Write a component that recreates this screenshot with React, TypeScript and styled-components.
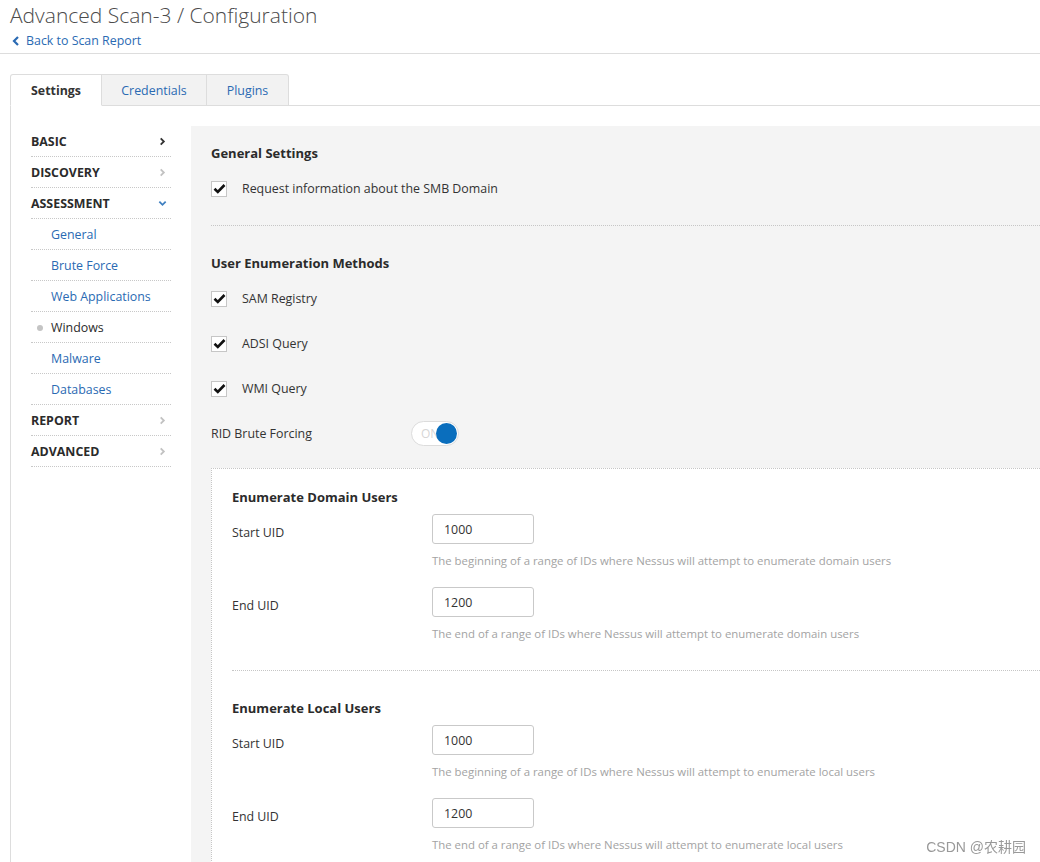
import * as React from "react";
import styled, { createGlobalStyle } from "styled-components";

const GlobalStyle = createGlobalStyle`
  html, body {
    margin: 0;
    padding: 0;
    background: #fff;
    font-family: "Open Sans", "Noto Sans", "Noto Sans CJK SC", sans-serif;
    color: #333;
    font-size: 12.4px;
  }
  * { box-sizing: border-box; }
`;

const Header = styled.div`
  padding: 0 0 3px 10px;
  border-bottom: 1px solid #ddd;
  h1 {
    margin: 0;
    font-size: 21px;
    font-weight: 300;
    color: #4b4b4b;
    line-height: 31px;
  }
`;

const BackLink = styled.a`
  display: flex;
  align-items: center;
  gap: 6px;
  padding-left: 2px;
  color: #2a6ab3;
  font-size: 12.4px;
  line-height: 19px;
  text-decoration: none;
`;

const Tabs = styled.div`
  display: flex;
  margin: 20px 0 0 10px;
  border-bottom: 1px solid #ddd;
`;

const Tab = styled.div<{ $active?: boolean; $w: number }>`
  width: ${({ $w }) => $w}px;
  height: 32px;
  margin-bottom: -1px;
  display: flex;
  align-items: center;
  justify-content: center;
  border: 1px solid #ddd;
  border-left-width: ${({ $active }) => ($active ? "1px" : "0")};
  border-bottom-color: ${({ $active }) => ($active ? "#fff" : "#ddd")};
  border-radius: ${({ $active }) => ($active ? "3px 0 0 0" : "0")};
  background: ${({ $active }) => ($active ? "#fff" : "#f2f2f2")};
  color: ${({ $active }) => ($active ? "#333" : "#2a6ab3")};
  font-weight: ${({ $active }) => ($active ? 700 : 400)};
  &:last-child {
    border-radius: 0 3px 0 0;
  }
`;

const Body = styled.div`
  display: flex;
  gap: 20px;
  margin-left: 10px;
  border-left: 1px solid #ddd;
  padding-top: 20px;
  min-height: 760px;
`;

const Sidebar = styled.nav`
  width: 160px;
  flex-shrink: 0;
  padding-left: 20px;
`;

const NavRow = styled.div<{ $sub?: boolean; $current?: boolean }>`
  position: relative;
  height: 31px;
  display: flex;
  align-items: center;
  justify-content: space-between;
  padding-left: ${({ $sub }) => ($sub ? "20px" : "0")};
  padding-right: 4px;
  border-bottom: 1px dotted #c8c8c8;
  font-weight: ${({ $sub }) => ($sub ? 400 : 700)};
  color: ${({ $sub, $current }) => ($sub && !$current ? "#2a6ab3" : "#2b2b2b")};
`;

const Dot = styled.span`
  position: absolute;
  left: 6px;
  top: 13px;
  width: 6px;
  height: 6px;
  border-radius: 50%;
  background: #c4c4c4;
`;

const Main = styled.main`
  flex: 1;
  background: #f4f4f4;
  padding: 19px 0 0 20px;
`;

const SectionTitle = styled.div`
  font-weight: 700;
  font-size: 13px;
  line-height: 17px;
  color: #2b2b2b;
`;

const Group = styled.div`
  display: flex;
  flex-direction: column;
  margin-top: 4px;
`;

const CheckRow = styled.div`
  display: flex;
  align-items: center;
  height: 45px;
  gap: 15px;
`;

const Box = styled.span`
  width: 16px;
  height: 16px;
  border: 1px solid #c6c6c6;
  background: #fff;
  display: flex;
  align-items: center;
  justify-content: center;
`;

const Divider = styled.div`
  border-top: 1px dotted #c6c6c6;
  margin: 14px 0 29px;
`;

const ToggleRow = styled.div`
  display: flex;
  align-items: center;
  height: 45px;
  label {
    width: 200px;
  }
`;

const Toggle = styled.div`
  position: relative;
  width: 48px;
  height: 25px;
  border: 1px solid #dcdcdc;
  border-radius: 13px;
  background: #fff;
  color: #d6d6d6;
  font-size: 12px;
  display: flex;
  align-items: center;
  padding-left: 9px;
`;

const Knob = styled.span`
  position: absolute;
  right: 1px;
  top: 1px;
  width: 21px;
  height: 21px;
  border-radius: 50%;
  background: #0a6ebd;
`;

const SubPanel = styled.div`
  margin-top: 12px;
  background: #fff;
  border: 1px dotted #c6c6c6;
  border-right: none;
  border-bottom: none;
  padding: 20px 0 0 20px;
`;

const FieldRow = styled.div`
  display: flex;
  padding-bottom: 18px;
`;

const FieldLabel = styled.div`
  width: 200px;
  padding-top: 10px;
`;

const FieldControl = styled.div`
  display: flex;
  flex-direction: column;
  gap: 8px;
`;

const Input = styled.input`
  width: 102px;
  height: 30px;
  border: 1px solid #c9c9c9;
  border-radius: 3px;
  padding: 0 11px;
  font-family: inherit;
  font-size: 12.4px;
  color: #333;
  background: #fff;
`;

const Help = styled.div`
  color: #a3a3a3;
  font-size: 11.4px;
  line-height: 17px;
`;

const SubTitle = styled(SectionTitle)`
  margin-bottom: 8px;
`;

const SubDivider = styled.div`
  border-top: 1px dotted #c6c6c6;
  margin: 10px 0 29px;
`;

const Watermark = styled.div`
  position: fixed;
  right: 14px;
  bottom: 6px;
  color: #999;
  font-family: "Liberation Sans", "Noto Sans CJK SC", sans-serif;
  font-size: 14px;
`;

const Check = () => (
  <Box>
    <svg width="13" height="11" viewBox="0 0 13 11">
      <path d="M1.5 5.8 L4.8 9 L11.5 2" fill="none" stroke="#111" strokeWidth="2.6" />
    </svg>
  </Box>
);

const Chevron = ({ dir, color }: { dir: "right" | "down"; color: string }) => (
  <svg width="9" height="9" viewBox="0 0 10 10">
    {dir === "right" ? (
      <path d="M3 1.5 L6.5 5 L3 8.5" fill="none" stroke={color} strokeWidth="2" />
    ) : (
      <path d="M1.5 3 L5 6.5 L8.5 3" fill="none" stroke={color} strokeWidth="2" />
    )}
  </svg>
);

const navItems = [
  { label: "BASIC", chev: "#333" },
  { label: "DISCOVERY", chev: "#c2c2c2" },
  { label: "ASSESSMENT", chev: "#3f7fc0", down: true },
  { label: "General", sub: true },
  { label: "Brute Force", sub: true },
  { label: "Web Applications", sub: true },
  { label: "Windows", sub: true, current: true },
  { label: "Malware", sub: true },
  { label: "Databases", sub: true },
  { label: "REPORT", chev: "#c2c2c2" },
  { label: "ADVANCED", chev: "#c2c2c2" },
];

const UidFields = ({ kind }: { kind: string }) => (
  <>
    <FieldRow>
      <FieldLabel>Start UID</FieldLabel>
      <FieldControl>
        <Input defaultValue="1000" />
        <Help>The beginning of a range of IDs where Nessus will attempt to enumerate {kind} users</Help>
      </FieldControl>
    </FieldRow>
    <FieldRow>
      <FieldLabel>End UID</FieldLabel>
      <FieldControl>
        <Input defaultValue="1200" />
        <Help>The end of a range of IDs where Nessus will attempt to enumerate {kind} users</Help>
      </FieldControl>
    </FieldRow>
  </>
);

export default function App() {
  return (
    <>
      <GlobalStyle />
      <Header>
        <h1>Advanced Scan-3 / Configuration</h1>
        <BackLink href="#">
          <svg width="8" height="10" viewBox="0 0 8 10">
            <path d="M6 1 L2 5 L6 9" fill="none" stroke="#2a6ab3" strokeWidth="2.2" />
          </svg>
          Back to Scan Report
        </BackLink>
      </Header>

      <Tabs>
        <Tab $active $w={92}>Settings</Tab>
        <Tab $w={105}>Credentials</Tab>
        <Tab $w={82}>Plugins</Tab>
      </Tabs>

      <Body>
        <Sidebar>
          {navItems.map((item) => (
            <NavRow key={item.label} $sub={item.sub} $current={item.current}>
              {item.current && <Dot />}
              <span>{item.label}</span>
              {item.chev && <Chevron dir={item.down ? "down" : "right"} color={item.chev} />}
            </NavRow>
          ))}
        </Sidebar>

        <Main>
          <SectionTitle>General Settings</SectionTitle>
          <Group>
            <CheckRow>
              <Check />
              Request information about the SMB Domain
            </CheckRow>
          </Group>
          <Divider />
          <SectionTitle>User Enumeration Methods</SectionTitle>
          <Group>
            <CheckRow>
              <Check />
              SAM Registry
            </CheckRow>
            <CheckRow>
              <Check />
              ADSI Query
            </CheckRow>
            <CheckRow>
              <Check />
              WMI Query
            </CheckRow>
            <ToggleRow>
              <label>RID Brute Forcing</label>
              <Toggle>
                ON
                <Knob />
              </Toggle>
            </ToggleRow>
          </Group>

          <SubPanel>
            <SubTitle>Enumerate Domain Users</SubTitle>
            <UidFields kind="domain" />
            <SubDivider />
            <SubTitle>Enumerate Local Users</SubTitle>
            <UidFields kind="local" />
          </SubPanel>
        </Main>
      </Body>
      <Watermark>CSDN @农耕园</Watermark>
    </>
  );
}
